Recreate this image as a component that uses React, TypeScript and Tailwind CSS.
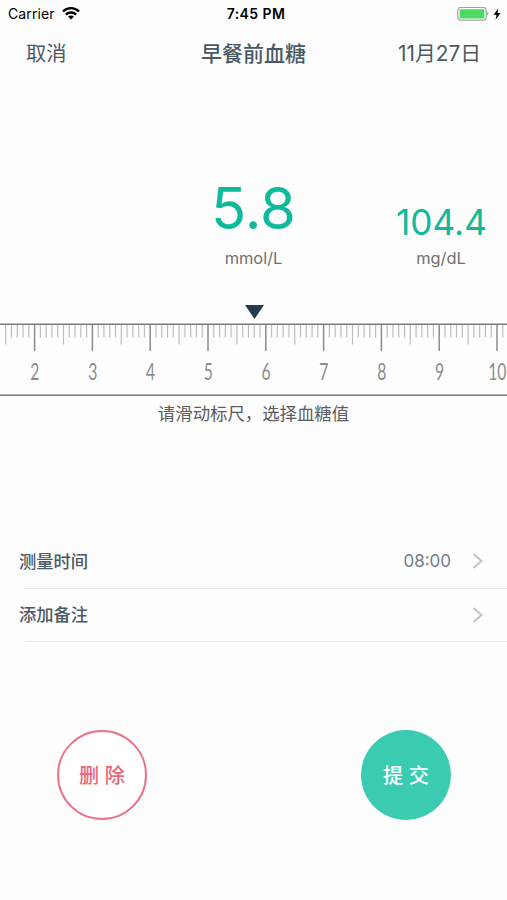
const UNIT = 57.8;
const RULER_START = 34.6 - UNIT * 2;

const ticks = Array.from({ length: 87 }, (_, i) => i + 15);
const labels = [2, 3, 4, 5, 6, 7, 8, 9, 10];

function StatusBar() {
  return (
    <div className="grid h-[27px] grid-cols-3 items-center pl-2 pr-[6px] leading-[27px] text-black">
      <div className="flex items-center gap-[7px]">
        <span className="text-[14px] tracking-[0.1px]">Carrier</span>
        <svg width="18" height="13" viewBox="0 0 18 13" fill="none" stroke="#000" strokeWidth="2.3">
          <path d="M1 4.5C5.4.1 12.6.1 17 4.5" />
          <path d="M3.8 7.6C6.7 4.8 11.3 4.8 14.2 7.6" />
          <path d="M6 9.6C7.6 8 10.4 8 12 9.6L9 12.6Z" fill="#000" stroke="none" />
        </svg>
      </div>
      <div className="whitespace-nowrap pl-[3px] text-center text-[14px] font-semibold tracking-[0.4px]">7:45 PM</div>
      <div className="flex items-center justify-end gap-1">
        <svg width="32" height="14" viewBox="0 0 32 14">
          <rect x="0.8" y="0.4" width="28.4" height="12.8" rx="3" fill="#fff" stroke="#a3a3a3" strokeWidth="1.2" />
          <rect x="2.6" y="2.2" width="24.8" height="9.2" rx="1" fill="#4cd964" />
          <path d="M30.2 4.6C31.8 5.2 31.8 8.2 30.2 8.8Z" fill="#a3a3a3" />
        </svg>
        <svg width="8" height="12" viewBox="0 0 8 12">
          <path d="M5.4 0.3L0.5 6.7H3.5L2.5 11.7L7.6 5H4.5Z" fill="#000" />
        </svg>
      </div>
    </div>
  );
}

function Ruler() {
  return (
    <svg className="block" width="507" height="96" viewBox="0 0 507 96">
      <path d="M245 5H264L254.5 19Z" fill="#263b4b" />
      <g transform="translate(0 -300)">
        {ticks.map((t) => {
          const x = RULER_START + (t * UNIT) / 10;
          const whole = t % 10 === 0;
          const y2 = whole ? 351 : t % 5 === 0 ? 344.5 : 337.5;
          return (
            <line key={t} x1={x} x2={x} y1="324" y2={y2} stroke={whole ? '#8c8c8c' : '#bdbdbd'} strokeWidth={whole ? 1.5 : 1.2} />
          );
        })}
      </g>
      <path d="M0 24.2H507M0 95.3H507" stroke="#7b7b7b" strokeWidth="1.4" />
      {labels.map((n) => (
        <text
          key={n}
          transform={`translate(${RULER_START + n * UNIT + 0.3} 80.4) scale(0.7 1)`}
          textAnchor="middle"
          className="fill-[#8c8c8c] font-['Lato',sans-serif] text-[22.5px] font-normal"
        >
          {n}
        </text>
      ))}
    </svg>
  );
}

function Chevron() {
  return (
    <svg width="10" height="16" viewBox="0 0 10 16" fill="none" stroke="#c2c2c5" strokeWidth="2">
      <path d="M0.6 1L8.4 8L0.6 15" />
    </svg>
  );
}

function Row({ title, value }: { title: string; value?: string }) {
  return (
    <div>
      <div className="flex h-[52.5px] items-center pl-[19px] pr-[24px]">
        <span className="flex-1 pt-px text-[17.3px] font-medium text-[#4b5965]">{title}</span>
        <span className="mr-[22px] text-[17px] text-[#747e86]">{value}</span>
        <Chevron />
      </div>
      <div className="ml-[25px] h-px bg-[#e6e6e6]" />
    </div>
  );
}

export default function App() {
  return (
    <div className="h-[900px] w-[507px] overflow-hidden bg-[#fdfdfd] font-['Inter','Noto_Sans_CJK_SC',sans-serif]">
      <StatusBar />

      <div className="flex h-[52px] items-center justify-between px-[26px] pt-px text-[20.3px] text-[#4b5965]">
        <span className="w-[83px] pt-px">取消</span>
        <span className="text-[21px] font-medium">早餐前血糖</span>
        <span className="w-[83px] whitespace-nowrap text-[20.8px]">11月27日</span>
      </div>

      <div className="grid h-[221px] grid-cols-[187px_133px_187px] pt-[93px] text-center">
        <div />
        <div>
          <div className="h-[74px] text-[58px] font-[390] leading-[73px] text-[#0fb99c]">5.8</div>
          <div className="h-6 text-[16.4px] leading-6 text-[#707070]">mmol/L</div>
        </div>
        <div className="pl-[56px]">
          <div className="h-[74px] pt-[14px] text-[35.2px] font-[380] leading-[72px] text-[#0fb99c]">104.4</div>
          <div className="h-6 pr-px text-[16.4px] leading-6 text-[#707070]">mg/dL</div>
        </div>
      </div>

      <Ruler />

      <p className="h-[139px] pt-[5px] text-center text-[17.4px] leading-[26px] text-[#5c5c5c]">请滑动标尺，选择血糖值</p>

      <Row title="测量时间" value="08:00" />
      <Row title="添加备注" />

      <div className="mt-[88px] flex justify-between pl-[57px] pr-[56px]">
        <button className="size-[90px] rounded-full border-2 border-[#ec7385] bg-white pt-[3px] text-[20.2px] font-medium text-[#e9667a]">
          删 除
        </button>
        <button className="size-[90px] rounded-full bg-[#3acbb0] pt-[3px] text-[20.2px] font-medium text-white">
          提 交
        </button>
      </div>
    </div>
  );
}
